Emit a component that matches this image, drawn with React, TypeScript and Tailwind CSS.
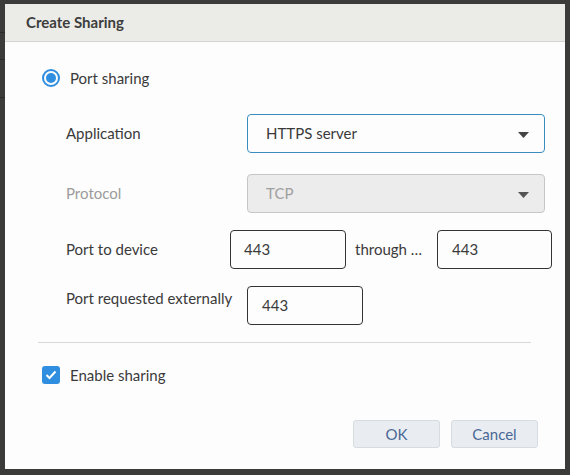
import React from "react";

function Arrow({ color }: { color: string }) {
  return (
    <svg width="11" height="6" viewBox="0 0 11 6" className="absolute right-[15px] top-[17px]">
      <path d="M0 0 L11 0 L5.5 6 Z" fill={color} />
    </svg>
  );
}

export default function App() {
  return (
    <div
      className="relative w-[570px] h-[475px] bg-[#3b3b39] overflow-hidden pt-[4px] pl-[5px]"
      style={{ fontFamily: "Lato, 'Noto Sans', sans-serif" }}
    >
      <div className="absolute left-0 top-[32px] w-[5px] h-px bg-[#2a2a2a]" />
      <div className="absolute left-0 top-[59px] w-[5px] h-px bg-[#2a2a2a]" />
      <div className="absolute left-0 top-[97px] w-[5px] h-px bg-[#2a2a2a]" />
      <div className="w-[560px] h-[465px] bg-[#fdfdfd] flex flex-col">
        <div className="h-[38px] bg-[#ebebe7] border-b border-[#d4d4d2] flex items-center pl-[21px]">
          <span className="text-[15px] font-bold text-[#3d3d3d]">Create Sharing</span>
        </div>
        <div className="flex flex-col pl-[37px] pt-[26px] text-[15px] text-[#3a3a3a]">
          <div className="flex items-center h-[20px] gap-[10px]">
            <div className="w-[18px] h-[18px] rounded-full border-2 border-[#2f8ee0] flex items-center justify-center">
              <div className="w-[10px] h-[10px] rounded-full bg-[#2f8ee0]" />
            </div>
            <span>Port sharing</span>
          </div>

          <div className="flex items-center mt-[26px] pl-[24px]">
            <span className="w-[181px]">Application</span>
            <div className="relative w-[298px] h-[39px] rounded-[4px] border border-[#3a8bbf] flex items-center pl-[18px]">
              <span>HTTPS server</span>
              <Arrow color="#444" />
            </div>
          </div>

          <div className="flex items-center mt-[21px] pl-[24px]">
            <span className="w-[181px] text-[#9b9b9b]">Protocol</span>
            <div className="relative w-[298px] h-[39px] rounded-[4px] border border-[#c6c6c6] bg-[#ececec] flex items-center pl-[18px]">
              <span className="text-[#a0a0a0]">TCP</span>
              <Arrow color="#555" />
            </div>
          </div>

          <div className="flex items-center mt-[17px] pl-[24px]">
            <span className="w-[164px]">Port to device</span>
            <div className="w-[116px] h-[39px] rounded-[4px] border border-[#333] flex items-center pl-[13px]">443</div>
            <span className="w-[91px] pl-[9px]">through …</span>
            <div className="w-[115px] h-[39px] rounded-[4px] border border-[#333] flex items-center pl-[14px]">443</div>
          </div>

          <div className="flex items-center mt-[17px] pl-[24px]">
            <span className="w-[181px] self-start pt-[1px]">Port requested externally</span>
            <div className="w-[116px] h-[39px] rounded-[4px] border border-[#333] flex items-center pl-[14px]">443</div>
          </div>

          <div className="mt-[17px] ml-[-4px] w-[493px] h-px bg-[#d8d8d8]" />

          <div className="flex items-center h-[20px] gap-[10px] mt-[22px]">
            <div className="w-[18px] h-[18px] rounded-[3px] bg-[#2f8ee0] flex items-center justify-center">
              <svg width="12" height="10" viewBox="0 0 12 10">
                <path d="M1.5 5 L4.5 8 L10.5 1.5" fill="none" stroke="#fff" strokeWidth="2" />
              </svg>
            </div>
            <span>Enable sharing</span>
          </div>

          <div className="flex justify-end gap-[11px] mt-[35px] pr-[27px]">
            <button className="w-[87px] h-[28px] rounded-[3px] bg-[#e9edf1] border border-[#d6dce2] text-[15px] text-[#4a6896]">OK</button>
            <button className="w-[87px] h-[28px] rounded-[3px] bg-[#e9edf1] border border-[#d6dce2] text-[15px] text-[#4a6896]">Cancel</button>
          </div>
        </div>
      </div>
    </div>
  );
}
